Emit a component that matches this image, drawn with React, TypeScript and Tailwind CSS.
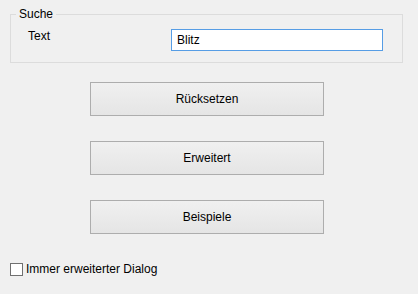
import { useState } from "react";

const FONT = { fontFamily: '"Liberation Sans", Arial, sans-serif' };

function DialogButton({ label }: { label: string }) {
  return (
    <button
      type="button"
      className="h-[34px] w-[234px] border border-[#adadad] bg-gradient-to-b from-[#f0f0f0] to-[#e5e5e5] text-[12px] leading-none text-black"
    >
      {label}
    </button>
  );
}

/** Suchdialog */
export default function App() {
  const [query, setQuery] = useState("Blitz");
  const [extended, setExtended] = useState(false);

  return (
    <div
      className="flex h-[294px] w-[418px] flex-col bg-[#f0f0f0] text-[12px] text-black"
      style={FONT}
    >
      <div className="relative mx-[10px] mt-[14px] h-[49px] w-[393px] border border-[#dcdcdc]">
        <span className="absolute -top-[8px] left-[5px] bg-[#f0f0f0] px-[3px] leading-[15px]">
          Suche
        </span>
        <div className="flex items-start pt-[14px]">
          <span className="ml-[17px] w-[143px] leading-[15px]">Text</span>
          <input
            value={query}
            onChange={(e) => setQuery(e.target.value)}
            className="h-[22px] w-[212px] border border-[#569de5] bg-white px-[5px] text-[12px] text-black outline-none"
            style={FONT}
          />
        </div>
      </div>

      <div className="mt-[19px] flex flex-col items-center gap-[25px] pr-[4px]">
        <DialogButton label="Rücksetzen" />
        <DialogButton label="Erweitert" />
        <DialogButton label="Beispiele" />
      </div>

      <label className="ml-[10px] mt-[28px] flex items-center gap-[3px]">
        <input
          type="checkbox"
          checked={extended}
          onChange={(e) => setExtended(e.target.checked)}
          className="h-[13px] w-[13px] appearance-none border border-[#707070] bg-white"
        />
        <span className="leading-[15px]">Immer erweiterter Dialog</span>
      </label>
    </div>
  );
}
